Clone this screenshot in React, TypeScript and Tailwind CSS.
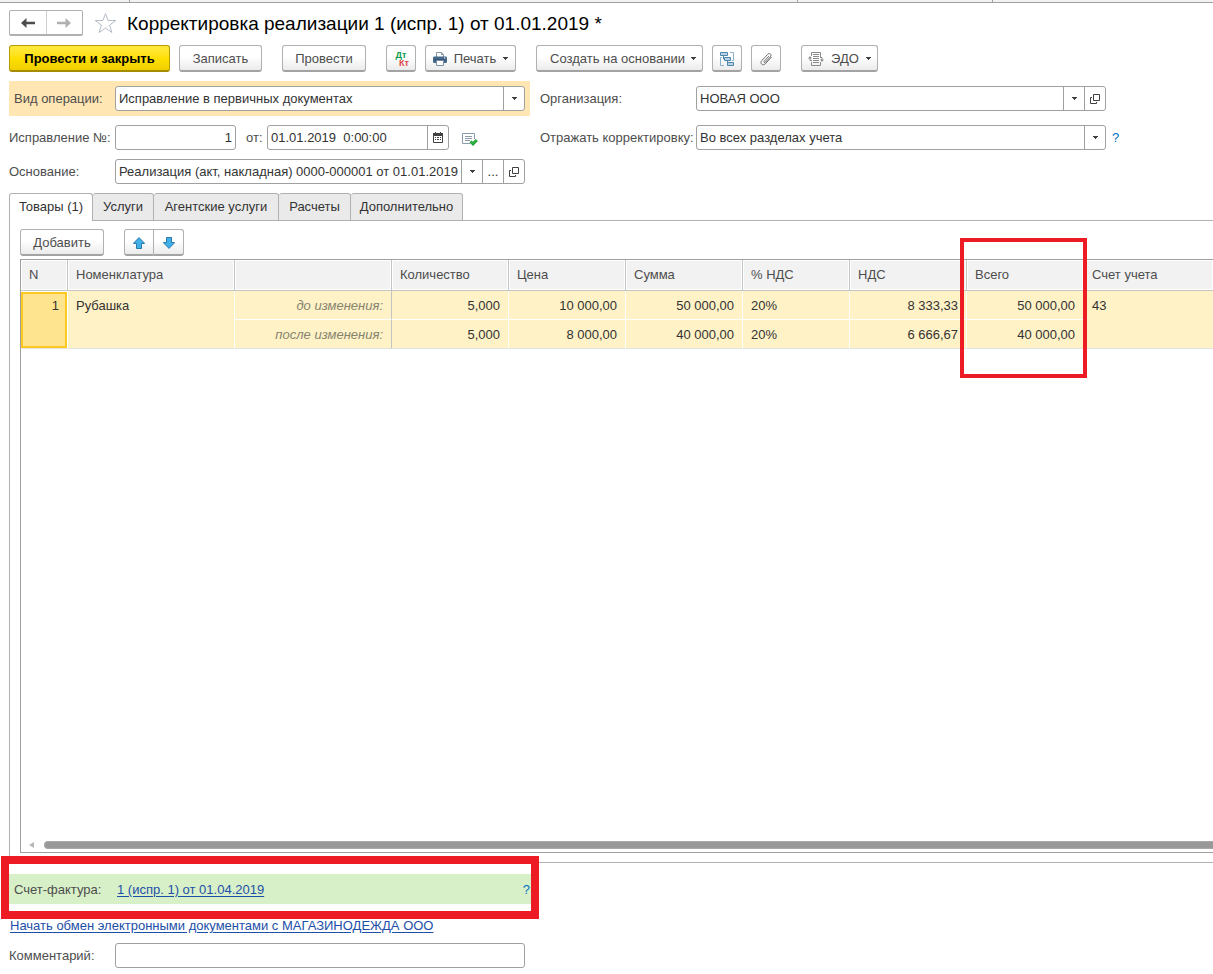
import type { ReactNode } from "react";

const buttonBase =
  "flex h-[27px] shrink-0 items-center justify-center whitespace-nowrap rounded-[3px] border border-[#b0b0b0] border-b-2 border-b-[#a3a3a3] bg-linear-to-b from-white from-45% to-[#ebebeb] text-[#4d4d4d] pt-px";

function Button({ children, className = "px-[13px]", label }: { children: ReactNode; className?: string; label?: string }) {
  return (
    <button type="button" aria-label={label} className={`${buttonBase} ${className}`}>
      {children}
    </button>
  );
}

function Caret() {
  return (
    <svg width="5" height="3" viewBox="0 0 5 3" className="shrink-0" aria-hidden="true">
      <path d="M0 0h5v1H4v1H3v1H2V2H1V1H0z" fill="#404040" />
    </svg>
  );
}

function OpenIcon() {
  return (
    <svg width="10" height="10" viewBox="0 0 10 10" fill="none" stroke="#404040" aria-hidden="true">
      <path d="M3.5 .5h6v6h-6zM2 3.5H.5v6h6V8" />
    </svg>
  );
}

function CalendarIcon() {
  return (
    <svg width="10" height="11" viewBox="0 0 10 11" aria-hidden="true">
      <path d="M.5 2v8.5h9V2" fill="none" stroke="#404040" />
      <path d="M0 1h10v3H0zM2 0h1v1H2zM7 0h1v1H7z" fill="#404040" />
      <path d="M2 5h1v1H2zM4 5h2v1H4zM7 5h1v1H7zM2 7h1v1H2zM4 7h2v1H4zM7 7h1v1H7z" fill="#404040" />
    </svg>
  );
}

function PrinterIcon() {
  return (
    <svg width="14" height="14" viewBox="0 0 14 14" className="shrink-0" aria-hidden="true">
      <path d="M3.5 5V.5h5l2 2V5" fill="#fff" stroke="#8797a6" />
      <path d="M8.5 .5v2h2" fill="none" stroke="#8797a6" />
      <rect x="0" y="4.5" width="14" height="6.5" rx="1.2" fill="#45698c" />
      <path d="M1.5 8h11" stroke="#24425f" />
      <path d="M3.5 8.5h7v5h-7z" fill="#fff" stroke="#7d8fa0" />
      <path d="M11 6h1.3" stroke="#fff" />
    </svg>
  );
}

function StructureIcon() {
  return (
    <svg width="16" height="16" viewBox="0 0 16 16" fill="none" stroke="#4c86ad" className="shrink-0" aria-hidden="true">
      <path d="M3 6.5H1.5v8H5M11 1.5h3.5v8H13" stroke="#8bb0c9" />
      <path d="M4.5 5v3H6M8.5 10v3H10" />
      <path d="M1.5 1.5h7v3h-7zM5.5 6.5h6v3h-6zM8.5 11.5h6v3h-6z" fill="#b9d3e4" />
    </svg>
  );
}

function ClipIcon() {
  return (
    <svg width="14" height="14" viewBox="0 0 14 14" fill="none" stroke="#6c6c6c" strokeWidth="1" strokeLinecap="round" strokeLinejoin="round" className="shrink-0" aria-hidden="true">
      <path d="M9.6 4.4 5.2 9.2c-.8.9.3 1.900 1.100 1.100l5-5.400c2-2.200-.6-4.600-2.600-2.500L2.900 8.500c-2.600 2.800.8 6 3.400 3.300l6-6.500" />
    </svg>
  );
}

function ExchangeIcon() {
  return (
    <svg width="16" height="14" viewBox="0 0 16 14" fill="none" stroke="#8a8a8a" className="shrink-0" aria-hidden="true">
      <path d="M3.5 4V.5h9V5M3.5 10v3.5h9V10" />
      <path d="M5 2.5h6M5 4.5h6M5 6.5h6M5 8.5h6M5 10.5h6" />
      <path d="M4 8.5H2V6M12 5.5h2V8" />
      <path d="M0 6.5h4L2 4zM12 7.5h4l-2 2.5z" fill="#8a8a8a" stroke="none" />
    </svg>
  );
}

function StatusIcon() {
  return (
    <svg width="16" height="13" viewBox="0 0 16 13" fill="none" aria-hidden="true">
      <path d="M8 10.5H.5v-10h12V6" stroke="#8c9cab" />
      <path d="M3 3.5h7M3 5.5h7M3 7.5h5" stroke="#8c9cab" />
      <path d="m8.500 8.500 2.500 2.300L14.800 7" stroke="#1d9a36" strokeWidth="3" />
      <path d="m8.800 8.500 2.200 2.100L14.500 7" stroke="#35cc4d" />
    </svg>
  );
}

function BlueArrow({ down = false }: { down?: boolean }) {
  return (
    <svg width="12" height="12" viewBox="0 0 12 12" className={down ? "rotate-180" : ""} aria-hidden="true">
      <path d="M6 .6 11.5 6.200v.3H8.500v5h-5v-5H.5v-.3z" fill="#3fb0e8" stroke="#2c78a8" strokeLinejoin="round" />
    </svg>
  );
}

const fieldBox = "flex h-[25px] overflow-hidden rounded-[3px] border border-[#a0a0a0] bg-white text-[#333]";
const fieldText = "min-w-0 flex-1 appearance-none bg-transparent px-[3px] outline-none";
const fieldButton = "flex w-[21px] shrink-0 items-center justify-center border-l border-[#a0a0a0]";

function SelectField({ id, value }: { id: string; value: string }) {
  return (
    <div className={`${fieldBox} w-[410px]`}>
      <select id={id} className={`${fieldText} -mr-[21px]`}>
        <option>{value}</option>
      </select>
      <span className={`${fieldButton} pointer-events-none`}>
        <Caret />
      </span>
    </div>
  );
}

const tabs = [
  { title: "Товары (1)", width: "w-[84px]" },
  { title: "Услуги", width: "w-[61px]" },
  { title: "Агентские услуги", width: "w-[125px]" },
  { title: "Расчеты", width: "w-[72px]" },
  { title: "Дополнительно", width: "w-[112px]" },
];

const columns = [
  { title: "N", width: "w-[47px]" },
  { title: "Номенклатура", width: "w-[167px]" },
  { title: "", width: "w-[157px]" },
  { title: "Количество", width: "w-[117px]" },
  { title: "Цена", width: "w-[117px]" },
  { title: "Сумма", width: "w-[117px]" },
  { title: "% НДС", width: "w-[107px]" },
  { title: "НДС", width: "w-[117px]" },
  { title: "Всего", width: "w-[117px]" },
  { title: "Счет учета", width: "w-auto" },
];

const before = ["5,000", "10 000,00", "50 000,00", "20%", "8 333,33", "50 000,00"];
const after = ["5,000", "8 000,00", "40 000,00", "20%", "6 666,67", "40 000,00"];

function ValueCells({ values, last = false }: { values: string[]; last?: boolean }) {
  return (
    <>
      {values.map((value, i) => (
        <td
          key={i}
          className={`h-[29px] border-r border-b border-r-white px-2 pt-[2px] ${last ? "border-b-[#e2e2e2]" : "border-b-white"} ${
            value.endsWith("%") ? "text-left" : "text-right"
          }`}
        >
          {value}
        </td>
      ))}
    </>
  );
}

export default function App() {
  return (
    <div className="flex min-h-screen flex-col overflow-x-hidden bg-white pb-[6px] font-['Liberation_Sans',Arial,sans-serif] text-[13px] leading-4 text-[#4d4d4d]">
      <div className="flex h-[3px] shrink-0 border-b border-[#a0a0a0] bg-[#f2f2f2]">
        <span className="w-[130px] border-r border-[#a0a0a0]" />
        <span className="w-[668px] border-r border-[#a0a0a0]" />
        <span className="w-[195px] border-r border-[#a0a0a0]" />
      </div>

      <header className="mt-[7px] flex h-[26px] items-center pl-[9px]">
        <div className="flex h-[26px] w-[74px] rounded-[2px] border border-b-2 border-[#b0b0b0]">
          <button type="button" aria-label="Назад" className="flex flex-1 items-center justify-center border-r border-[#d0d0d0]">
            <svg width="14" height="10" viewBox="0 0 14 10" aria-hidden="true">
              <path d="M0 5 5.500 0v3.700H14v2.600H5.500V10z" fill="#4d4d4d" />
            </svg>
          </button>
          <button type="button" aria-label="Вперед" className="flex flex-1 items-center justify-center">
            <svg width="14" height="10" viewBox="0 0 14 10" aria-hidden="true">
              <path d="M14 5 8.500 0v3.700H0v2.600h8.500V10z" fill="#b0b0b0" />
            </svg>
          </button>
        </div>
        <button type="button" aria-label="В избранное" className="ml-[11px]">
          <svg width="23" height="22" viewBox="0 0 23 22" fill="none" aria-hidden="true">
            <path d="m11.500 1.500 2.600 7h7.700l-6.200 4.600 2.300 7.400-6.400-4.500-6.400 4.500 2.300-7.400L1.200 8.500h7.700z" stroke="#b4bcc6" />
          </svg>
        </button>
        <h1 className="ml-[10px] pt-px text-[19px] leading-6 whitespace-nowrap text-black">Корректировка реализации 1 (испр. 1) от 01.01.2019 *</h1>
      </header>

      <div className="mt-[9px] flex gap-5 pl-[9px]">
        <div className="flex gap-[9px]">
          <button
            type="button"
            className="h-[27px] w-[161px] rounded-[3px] border border-[#b89c00] border-b-2 border-b-[#a68c00] bg-linear-to-b from-[#ffe93d] via-[#ffe000] to-[#f0cf00] pt-px font-bold whitespace-nowrap text-black"
          >
            Провести и закрыть
          </button>
          <Button className="w-[83px]">Записать</Button>
        </div>
        <Button className="w-[84px]">Провести</Button>
        <div className="flex gap-[9px]">
          <Button className="w-[30px] text-[9px] leading-[8px] font-bold" label="Дт Кт">
            <span className="flex flex-col">
              <span className="text-[#0a9a4a]">Дт</span>
              <span className="pl-[6px] text-[#e04848]">Кт</span>
            </span>
          </Button>
          <Button className="w-[91px] gap-[7px]">
            <PrinterIcon />
            Печать
            <Caret />
          </Button>
        </div>
        <div className="flex gap-[9px]">
          <Button className="w-[167px] gap-[6px] pl-[7px]">
            Создать на основании
            <Caret />
          </Button>
          <Button className="w-[30px]" label="Структура подчиненности">
            <StructureIcon />
          </Button>
          <Button className="w-[30px]" label="Файлы">
            <ClipIcon />
          </Button>
        </div>
        <Button className="w-[77px] gap-[7px]">
          <ExchangeIcon />
          ЭДО
          <Caret />
        </Button>
      </div>

      <div className="mt-[9px] grid grid-cols-[521px_1fr] gap-x-[10px] gap-y-[9px] pl-[9px] whitespace-nowrap">
        <div className="flex h-[35px] items-center bg-[#ffe6b3]">
          <label htmlFor="operation" className="w-[106px] pl-[5px]">Вид операции:</label>
          <SelectField id="operation" value="Исправление в первичных документах" />
        </div>
        <div className="flex items-center">
          <label htmlFor="organization" className="w-[156px]">Организация:</label>
          <div className={`${fieldBox} w-[410px]`}>
            <input id="organization" className={fieldText} defaultValue="НОВАЯ ООО" />
            <button type="button" aria-label="Выбрать организацию" className={fieldButton}><Caret /></button>
            <button type="button" aria-label="Открыть организацию" className={fieldButton}><OpenIcon /></button>
          </div>
        </div>

        <div className="flex items-center">
          <label htmlFor="number" className="w-[106px]">Исправление №:</label>
          <div className={`${fieldBox} w-[121px]`}>
            <input id="number" className={`${fieldText} text-right`} defaultValue="1" />
          </div>
          <label htmlFor="date" className="w-[31px] pl-[10px]">от:</label>
          <div className={`${fieldBox} w-[182px]`}>
            <input id="date" className={fieldText} defaultValue="01.01.2019  0:00:00" />
            <button type="button" aria-label="Календарь" className={fieldButton}><CalendarIcon /></button>
          </div>
          <button type="button" aria-label="Состояние документа" className="ml-[13px] pt-1"><StatusIcon /></button>
        </div>
        <div className="flex items-center">
          <label htmlFor="sections" className="w-[156px]">Отражать корректировку:</label>
          <SelectField id="sections" value="Во всех разделах учета" />
          <button type="button" className="ml-[6px] text-[#0070c0]">?</button>
        </div>

        <div className="flex items-center">
          <label htmlFor="basis" className="w-[106px]">Основание:</label>
          <div className={`${fieldBox} w-[410px]`}>
            <input id="basis" className={fieldText} defaultValue="Реализация (акт, накладная) 0000-000001 от 01.01.2019 0:00:00" />
            <button type="button" aria-label="Выбрать основание" className={fieldButton}><Caret /></button>
            <button type="button" className={fieldButton}>...</button>
            <button type="button" aria-label="Открыть основание" className={fieldButton}><OpenIcon /></button>
          </div>
        </div>
      </div>

      <div role="tablist" className="relative z-10 mt-[9px] -mb-px flex pl-[9px] text-[#333]">
        {tabs.map(({ title, width }, i) => (
          <button
            key={title}
            type="button"
            role="tab"
            aria-selected={i === 0}
            className={`flex h-[28px] shrink-0 items-center justify-center rounded-t-[3px] border-t border-r border-[#b0b0b0] whitespace-nowrap ${width} ${
              i === 0 ? "border-l bg-white pb-px" : "border-b bg-[#eaeaea]"
            }`}
          >
            {title}
          </button>
        ))}
      </div>

      <main className="ml-[9px] flex flex-1 flex-col border-y border-l border-[#b0b0b0] pt-2 pb-[9px] pl-[10px]">
        <div className="flex gap-5">
          <Button className="w-[84px]">Добавить</Button>
          <div className="flex">
            <Button className="w-[30px] rounded-r-none" label="Переместить вверх"><BlueArrow /></Button>
            <Button className="w-[30px] rounded-l-none border-l-0" label="Переместить вниз"><BlueArrow down /></Button>
          </div>
        </div>

        <div className="mt-[3px] flex flex-1 flex-col border-y border-l border-[#a0a0a0]">
          <table className="w-full table-fixed border-separate border-spacing-0 text-left whitespace-nowrap text-[#333]">
            <thead>
              <tr>
                {columns.map(({ title, width }) => (
                  <th
                    key={title}
                    scope="col"
                    className={`relative h-[31px] border-r border-b border-[#c4c4c4] bg-[#f2f2f2] px-2 font-normal text-[#4d4d4d] shadow-[inset_0_0_0_1px_#fff] last:border-r-0 ${width}`}
                  >
                    {title}
                    {title === "Всего" && (
                      <span className="pointer-events-none absolute -top-[22px] -left-[7px] z-10 h-[140px] w-[127px] border-4 border-[#ed1c24]" />
                    )}
                  </th>
                ))}
              </tr>
            </thead>
            <tbody className="bg-[#fff2c6]">
              <tr>
                <td
                  rowSpan={2}
                  className="border border-l-0 border-white border-b-[#e2e2e2] bg-[#ffe48f] px-2 pt-[6px] text-right align-top shadow-[inset_0_0_0_2px_#fcc921]"
                >
                  1
                </td>
                <td rowSpan={2} className="border-r border-b border-r-white border-b-[#e2e2e2] px-2 pt-[7px] align-top">Рубашка</td>
                <td className="h-[29px] border-r border-b border-r-[#c4c4c4] border-b-white px-2 pt-[2px] text-right text-[#86836f] italic">
                  до изменения:
                </td>
                <ValueCells values={before} />
                <td rowSpan={2} className="border-b border-[#e2e2e2] px-2 pt-[7px] align-top">43</td>
              </tr>
              <tr>
                <td className="h-[29px] border-r border-b border-r-[#c4c4c4] border-b-[#e2e2e2] px-2 pt-[2px] text-right text-[#86836f] italic">
                  после изменения:
                </td>
                <ValueCells values={after} last />
              </tr>
            </tbody>
          </table>
          <div className="mt-auto mb-[3px] flex items-center pl-2">
            <svg width="5" height="6" viewBox="0 0 5 6" aria-hidden="true">
              <path d="M5 0v6L0 3z" fill="#b8b8b8" />
            </svg>
            <div className="ml-[10px] h-2 flex-1 rounded-l-full border border-r-0 border-[#a8a8a8] bg-[#999]" />
          </div>
        </div>
      </main>

      <div className="relative mt-[11px] ml-[9px] flex h-[30px] w-[522px] items-center bg-[#d8f0c8] pt-px whitespace-nowrap">
        <span className="w-[108px] pl-[5px]">Счет-фактура:</span>
        <a href="#invoice" className="text-[#1d4fa8] underline underline-offset-2">1 (испр. 1) от 01.04.2019</a>
        <button type="button" className="mr-px ml-auto text-[#0070c0]">?</button>
        <span className="pointer-events-none absolute -top-[18px] -left-2 z-10 h-[63px] w-[538px] border-8 border-[#ed1c24]" />
      </div>
      <a href="#exchange" className="mt-[14px] ml-[10px] self-start whitespace-nowrap text-[#1d4fa8] underline underline-offset-2">
        Начать обмен электронными документами с МАГАЗИНОДЕЖДА ООО
      </a>
      <div className="mt-[9px] flex items-center pl-[9px]">
        <label htmlFor="comment" className="w-[106px]">Комментарий:</label>
        <div className={`${fieldBox} w-[410px]`}>
          <input id="comment" className={fieldText} />
        </div>
      </div>
    </div>
  );
}
